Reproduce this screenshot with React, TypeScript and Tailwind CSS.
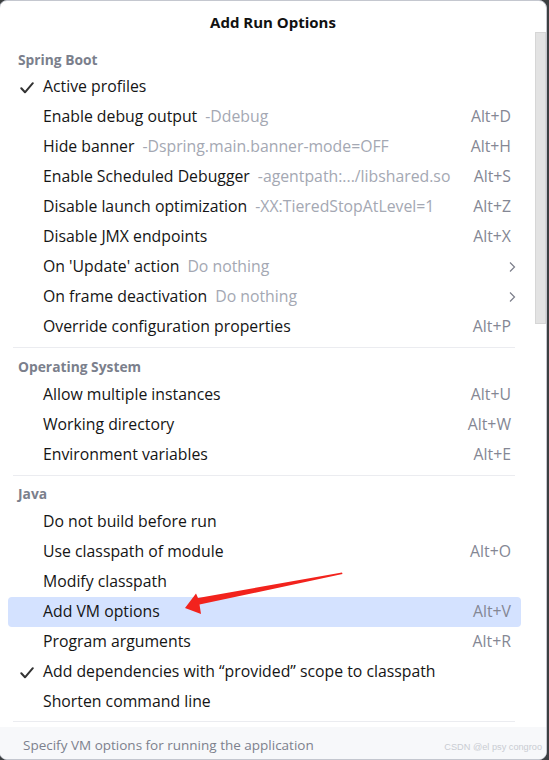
import React from "react";

type Item = {
  label: string;
  hint?: string;
  shortcut?: string;
  checked?: boolean;
  sub?: boolean;
  selected?: boolean;
};

const springBoot: Item[] = [
  { label: "Active profiles", checked: true },
  { label: "Enable debug output", hint: "-Ddebug", shortcut: "Alt+D" },
  { label: "Hide banner", hint: "-Dspring.main.banner-mode=OFF", shortcut: "Alt+H" },
  { label: "Enable Scheduled Debugger", hint: "-agentpath:.../libshared.so", shortcut: "Alt+S" },
  { label: "Disable launch optimization", hint: "-XX:TieredStopAtLevel=1", shortcut: "Alt+Z" },
  { label: "Disable JMX endpoints", shortcut: "Alt+X" },
  { label: "On 'Update' action", hint: "Do nothing", sub: true },
  { label: "On frame deactivation", hint: "Do nothing", sub: true },
  { label: "Override configuration properties", shortcut: "Alt+P" },
];

const os: Item[] = [
  { label: "Allow multiple instances", shortcut: "Alt+U" },
  { label: "Working directory", shortcut: "Alt+W" },
  { label: "Environment variables", shortcut: "Alt+E" },
];

const java: Item[] = [
  { label: "Do not build before run" },
  { label: "Use classpath of module", shortcut: "Alt+O" },
  { label: "Modify classpath" },
  { label: "Add VM options", shortcut: "Alt+V", selected: true },
  { label: "Program arguments", shortcut: "Alt+R" },
  { label: "Add dependencies with \u201Cprovided\u201D scope to classpath", checked: true },
  { label: "Shorten command line" },
];

function Row({ item }: { item: Item }) {
  return (
    <div
      className={
        "relative h-[30px] mx-[8px] w-[513px] rounded-[4px] flex items-center " +
        (item.selected ? "bg-[#d4e2ff]" : "")
      }
    >
      <div className="w-[35px] flex pl-[12px] shrink-0">
        {item.checked && (
          <svg width="14" height="12" viewBox="0 0 14 12" className="mt-[1px]">
            <path d="M1.3 6.3 L5 10.3 L12.8 1.2" fill="none" stroke="#333" strokeWidth="2" strokeLinecap="round" strokeLinejoin="round" />
          </svg>
        )}
      </div>
      <div className="flex-1 flex items-center whitespace-nowrap">
        <span className="text-[#151515]">{item.label}</span>
        {item.hint && <span className="ml-[8px] text-[#a4a8b3]">{item.hint}</span>}
      </div>
      {item.shortcut && <span className="pr-[10px] text-[#848794]">{item.shortcut}</span>}
      {item.sub && (
        <svg width="8" height="12" viewBox="0 0 8 12" className="mr-[5px]">
          <path d="M2 1.5 L6.5 6 L2 10.5" fill="none" stroke="#7b7e8a" strokeWidth="1.2" />
        </svg>
      )}
    </div>
  );
}

function Header({ text, h, pt }: { text: string; h: string; pt: string }) {
  return (
    <div className={"pl-[18px] text-[13.8px] font-bold text-[#7b7f8c] leading-[20px] " + h + " " + pt}>{text}</div>
  );
}

function Sep() {
  return <div className="ml-[13px] w-[502px] h-[1px] bg-[#ebecf0]" />;
}

export default function App() {
  return (
    <div
      className="w-[549px] h-[760px] bg-[#3c3f41] relative overflow-hidden text-[15.8px]"
      style={{ fontFamily: '"Open Sans", "Noto Sans", sans-serif' }}
    >
      <div className="absolute left-[-1px] top-0 w-[548px] h-[760px] bg-white rounded-[8px] border border-[#c4c7cf] overflow-hidden flex flex-col">
        <div className="h-[42px] shrink-0 flex items-center justify-center font-bold text-[15px] text-[#111]">
          Add Run Options
        </div>
        <Header text="Spring Boot" h="h-[29px]" pt="pt-[7px]" />
        {springBoot.map((it) => (
          <Row key={it.label} item={it} />
        ))}
        <div className="h-[5px]" />
        <Sep />
        <Header text="Operating System" h="h-[32px]" pt="pt-[9px]" />
        {os.map((it) => (
          <Row key={it.label} item={it} />
        ))}
        <div className="h-[5px]" />
        <Sep />
        <Header text="Java" h="h-[31px]" pt="pt-[8px]" />
        {java.map((it) => (
          <Row key={it.label} item={it} />
        ))}
        <div className="h-[4px]" />
        <Sep />
        <div className="h-[5px]" />
        <div className="flex-1 bg-[#f7f8fa] flex items-center pl-[23px] pt-[4px] text-[13.5px] text-[#7d818d] relative">
          Specify VM options for running the application
          <span
            className="absolute right-[4px] bottom-[4px] text-[9.2px] text-[#c9ccd2]"
            style={{ fontFamily: '"Liberation Sans", sans-serif' }}
          >
            CSDN @el psy congroo
          </span>
        </div>
        <div className="absolute left-[535px] top-[31px] w-[11px] h-[292px] bg-[#e3e3e3] border border-[#d6d6d6]" />
      </div>
      <svg className="absolute left-0 top-0 pointer-events-none" width="549" height="760">
        <path d="M342 572.5 L198 598 L196 593.5 L185 608 L201 614 L199.5 604.5 L342.5 574 Z" fill="#f2231d" />
      </svg>
    </div>
  );
}
